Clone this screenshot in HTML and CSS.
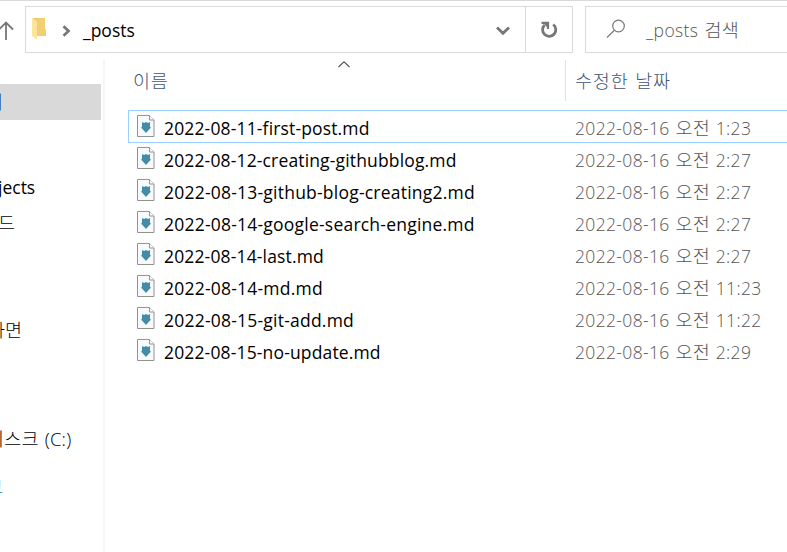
FILE: index.html
```html
<!DOCTYPE html>
<html lang="ko">
<head>
<meta charset="utf-8">
<title>_posts</title>
<link rel="stylesheet" href="styles.css">
</head>
<body>
<svg class="defs" width="0" height="0">
  <symbol id="md" viewBox="0 0 18 22">
    <path d="M.5.5h12l4.500 4.500v16.500H.5z" fill="#f8f9fb" stroke="#929292"/>
    <path d="M12.500.5v4.500H17" fill="#fff" stroke="#929292"/>
    <path d="M5 7l2 1L9 7l2 1 2-1v5.200h1.200L9 18 3.800 12.200H5z" fill="#458ba8"/>
  </symbol>
</svg>
<header class="toolbar">
  <svg class="up" width="14" height="20" viewBox="0 0 14 20"><path d="M6 19V1.500M-1 8.500l7-7 7 7" fill="none" stroke="#777" stroke-width="1.800"/></svg>
  <div class="address">
    <svg class="folder" width="15" height="22" viewBox="0 0 15 22"><path d="M1 0h12v11l1 1v6H4z" fill="#edc765"/><path d="M5 0h8v11l1 1v6H5z" fill="#f2cf72"/><path d="M0 0l5 3v18.500L0 18z" fill="#ffe597"/></svg>
    <svg class="crumb" width="9" height="12" viewBox="0 0 9 12"><path d="M1.500 1.300L6.500 6l-5 4.700" fill="none" stroke="#777" stroke-width="2.700"/></svg>
    <span class="path">_posts</span>
    <svg class="drop" width="14" height="10" viewBox="0 0 14 10"><path d="M1 1.500l6 5.800 6-5.800" fill="none" stroke="#777" stroke-width="2.800"/></svg>
    <div class="refresh"><svg width="18" height="18" viewBox="0 0 18 18"><path d="M13.200 3.500A6.600 6.600 0 1 1 4.600 4" fill="none" stroke="#777" stroke-width="2.800"/><path d="M1.500 1.800h6.500V8" fill="none" stroke="#777" stroke-width="2.200"/><path d="M4 3l4 0v4z" fill="#777"/></svg></div>
  </div>
  <div class="search">
    <svg width="20" height="20" viewBox="0 0 20 20"><circle cx="12.500" cy="7" r="5.800" fill="none" stroke="#777" stroke-width="1.200"/><path d="M8.400 11.200L1 18.500" stroke="#777" stroke-width="1.200"/></svg>
    <span>_posts <b class="ko">검색</b></span>
  </div>
</header>
<main class="body">
  <nav class="tree">
    <div class="node picked"><span class="t1">기</span></div>
    <div class="node n2"><span class="t2">jects</span></div>
    <div class="node n3"><span class="t3">드</span></div>
    <div class="node n4"><span class="t4">화면</span></div>
    <div class="node n5"><span class="t5">디스크 (C:)</span></div>
    <div class="node n6"><span class="t6">크</span></div>
  </nav>
  <section class="files">
    <div class="head">
      <div class="h-name">이름<svg class="sort" width="12" height="7" viewBox="0 0 12 7"><path d="M.5 6L6 .8 11.500 6" fill="none" stroke="#555" stroke-width="1.100"/></svg></div>
      <div class="h-date">수정한 날짜</div>
    </div>
    <div class="row focus"><svg class="icon"><use href="#md"/></svg><span class="name">2022-08-11-first-post.md</span><span class="date">2022-08-16 <b class="ko">오전</b> 1:23</span></div>
    <div class="row"><svg class="icon"><use href="#md"/></svg><span class="name">2022-08-12-creating-githubblog.md</span><span class="date">2022-08-16 <b class="ko">오전</b> 2:27</span></div>
    <div class="row"><svg class="icon"><use href="#md"/></svg><span class="name long">2022-08-13-github-blog-creating2.md</span><span class="date">2022-08-16 <b class="ko">오전</b> 2:27</span></div>
    <div class="row"><svg class="icon"><use href="#md"/></svg><span class="name long">2022-08-14-google-search-engine.md</span><span class="date">2022-08-16 <b class="ko">오전</b> 2:27</span></div>
    <div class="row"><svg class="icon"><use href="#md"/></svg><span class="name">2022-08-14-last.md</span><span class="date">2022-08-16 <b class="ko">오전</b> 2:27</span></div>
    <div class="row"><svg class="icon"><use href="#md"/></svg><span class="name long">2022-08-14-md.md</span><span class="date">2022-08-16 <b class="ko">오전</b> 11:23</span></div>
    <div class="row"><svg class="icon"><use href="#md"/></svg><span class="name long">2022-08-15-git-add.md</span><span class="date">2022-08-16 <b class="ko">오전</b> 11:22</span></div>
    <div class="row"><svg class="icon"><use href="#md"/></svg><span class="name">2022-08-15-no-update.md</span><span class="date">2022-08-16 <b class="ko">오전</b> 2:29</span></div>
  </section>
</main>
</body>
</html>
```
FILE: styles.css
```css
* { box-sizing: border-box; }
body { margin: 0; width: 787px; height: 552px; overflow: hidden; background: #fff; color: #000; border-top: 1px solid #d9d9d9; font: 400 17.5px/24px "Open Sans", "Noto Sans CJK KR", sans-serif; white-space: nowrap; }
svg { display: block; flex: none; }
.defs { position: absolute; }
.toolbar { display: flex; height: 59px; padding-top: 5px; }
.up { margin: 15px 11px 0 0; }
.address { display: flex; align-items: center; width: 548px; height: 47px; border: 1px solid #d9d9d9; }
.folder { margin-left: 6px; margin-top: -1px; }
.crumb { margin-left: 15px; margin-top: 2px; }
.path { margin-left: 12px; margin-top: 1px; }
.drop { margin-left: auto; margin-right: 15px; margin-top: 2px; }
.refresh { display: flex; align-items: center; justify-content: center; width: 47px; height: 45px; border-left: 1px solid #d9d9d9; }
.search { display: flex; align-items: center; flex: 1; margin-left: 12px; height: 47px; border: 1px solid #d9d9d9; border-right: 0; padding-left: 20px; color: #555; }
.search span { margin-left: 20px; margin-top: 1px; font-weight: 300; letter-spacing: .4px; word-spacing: 1px; }
.search svg { margin-top: -2px; }
.ko { font-size: 18.5px; font-weight: 300; line-height: 1; letter-spacing: .3px; }
.body { display: flex; height: 492px; }
.tree { width: 105px; height: 492px; border-right: 2px solid #f5f5f5; padding-top: 24px; overflow: hidden; }
.node { display: flex; align-items: center; width: 101px; height: 36px; font-size: 18.5px; font-weight: 300; }
.node span { flex: none; }
.picked { background: #d9d9d9; color: #000050; }
.t1 { margin-left: -14px; }
.n2 { margin-top: 49px; font-size: 17.5px; font-weight: 400; }
.t2 { margin-left: -2px; }
.t3 { margin-left: -2px; }
.n4 { margin-top: 71px; }
.t4 { margin-left: -12px; }
.n5 { margin-top: 73px; }
.t5 { margin-left: -13px; letter-spacing: .2px; word-spacing: 1px; }
.n6 { margin-top: 12px; color: #0078d7; }
.t6 { margin-left: -14px; }
.files { flex: 1; padding-left: 23px; }
.head { display: flex; height: 50px; color: #3f5573; font-size: 18.5px; font-weight: 300; letter-spacing: .8px; word-spacing: 1.2px; }
.h-name { position: relative; width: 438px; height: 41px; padding: 9px 0 0 5px; border-right: 1px solid #e2e2e2; }
.h-date { padding: 9px 0 0 9px; }
.sort { position: absolute; left: 210px; top: 1px; }
.row { display: flex; align-items: center; height: 32px; padding-left: 9px; }
.focus { height: 33px; margin-bottom: -1px; border: 1px solid #99d1ff; border-right: 0; padding-left: 8px; }
.icon { width: 18px; height: 22px; margin-top: -1px; }
.name { width: 411px; margin-left: 9px; padding-top: 4px; letter-spacing: .15px; }
.long { letter-spacing: .22px; }
.date { padding-top: 4px; color: #555; font-weight: 300; letter-spacing: .35px; word-spacing: .8px; }
.focus .name, .focus .date { padding-top: 3px; }
```
